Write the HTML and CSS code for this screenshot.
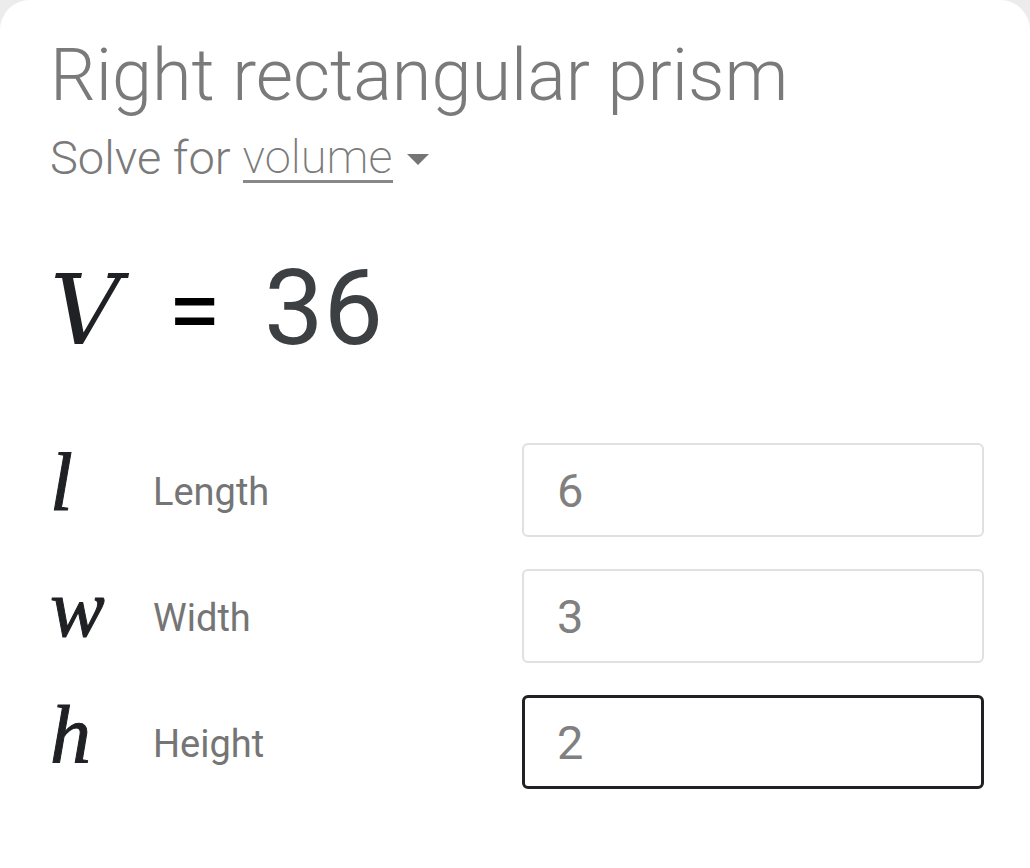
FILE: index.html
```html
<!DOCTYPE html>
<html>
<head>
<meta charset="utf-8">
<link rel="stylesheet" href="styles.css">
</head>
<body>
<div class="card">
  <h1 class="title">Right rectangular prism</h1>
  <div class="solve">Solve for <span class="target">volume</span><span class="caret"></span></div>
  <div class="result"><span class="var-big">V</span><span class="eq">=</span><span class="num">36</span></div>
  <div class="rows">
    <div class="row">
      <span class="var">l</span>
      <span class="label">Length</span>
      <div class="field">6</div>
    </div>
    <div class="row">
      <span class="var">w</span>
      <span class="label">Width</span>
      <div class="field">3</div>
    </div>
    <div class="row">
      <span class="var">h</span>
      <span class="label">Height</span>
      <div class="field active">2</div>
    </div>
  </div>
</div>
</body>
</html>
```
FILE: styles.css
```css
html, body {
  margin: 0;
  padding: 0;
  background: #ececec;
  height: 100%;
}
body {
  font-family: Roboto, "Liberation Sans", sans-serif;
}
.card {
  background: #fff;
  border-radius: 30px 30px 0 0;
  min-height: 868px;
  box-sizing: border-box;
  padding: 34px 46px 0 50px;
}
.title {
  margin: 0;
  font-weight: 300;
  font-size: 72px;
  line-height: 84px;
  color: #7a7a7a;
}
.solve {
  margin-top: 12px;
  font-size: 47px;
  font-weight: 300;
  line-height: 56px;
  color: #7a7a7a;
  display: flex;
  align-items: center;
}
.solve .target {
  font-weight: 200;
  margin-left: 12px;
  border-bottom: 3px solid #888;
  line-height: 46px;
}
.caret {
  display: inline-block;
  width: 0;
  height: 0;
  border-left: 11px solid transparent;
  border-right: 11px solid transparent;
  border-top: 11px solid #757575;
  margin-left: 14px;
  margin-top: 2px;
}
.result {
  margin-top: 60px;
  display: flex;
  align-items: baseline;
  height: 120px;
}
.var-big {
  font-family: "DejaVu Serif", "Liberation Serif", serif;
  font-style: italic;
  font-size: 98px;
  color: #202124;
  width: 112px;
  margin-left: 0;
}
.eq {
  font-size: 96px;
  color: #000;
  width: 96px;
  margin-left: 6px;
}
.num {
  font-size: 106px;
  color: #3c4043;
}
.rows {
  margin-top: 76px;
  display: flex;
  flex-direction: column;
  gap: 32px;
}
.row {
  display: grid;
  grid-template-columns: 103px 369px 1fr;
  align-items: center;
  height: 94px;
}
.var {
  font-family: "Liberation Serif", "DejaVu Serif", serif;
  font-style: italic;
  font-size: 82px;
  color: #202124;
  -webkit-text-stroke: 1px #202124;
  line-height: 1;
  margin-bottom: 14px;
}
.label {
  font-size: 38px;
  color: #757575;
  padding-top: 4px;
}
.field {
  box-sizing: border-box;
  height: 94px;
  border: 2px solid #e0e0e0;
  border-radius: 6px;
  padding-left: 33px;
  font-size: 47px;
  color: #808080;
  display: flex;
  align-items: center;
}
.field.active {
  border: 3px solid #202124;
  padding-left: 32px;
}
```
